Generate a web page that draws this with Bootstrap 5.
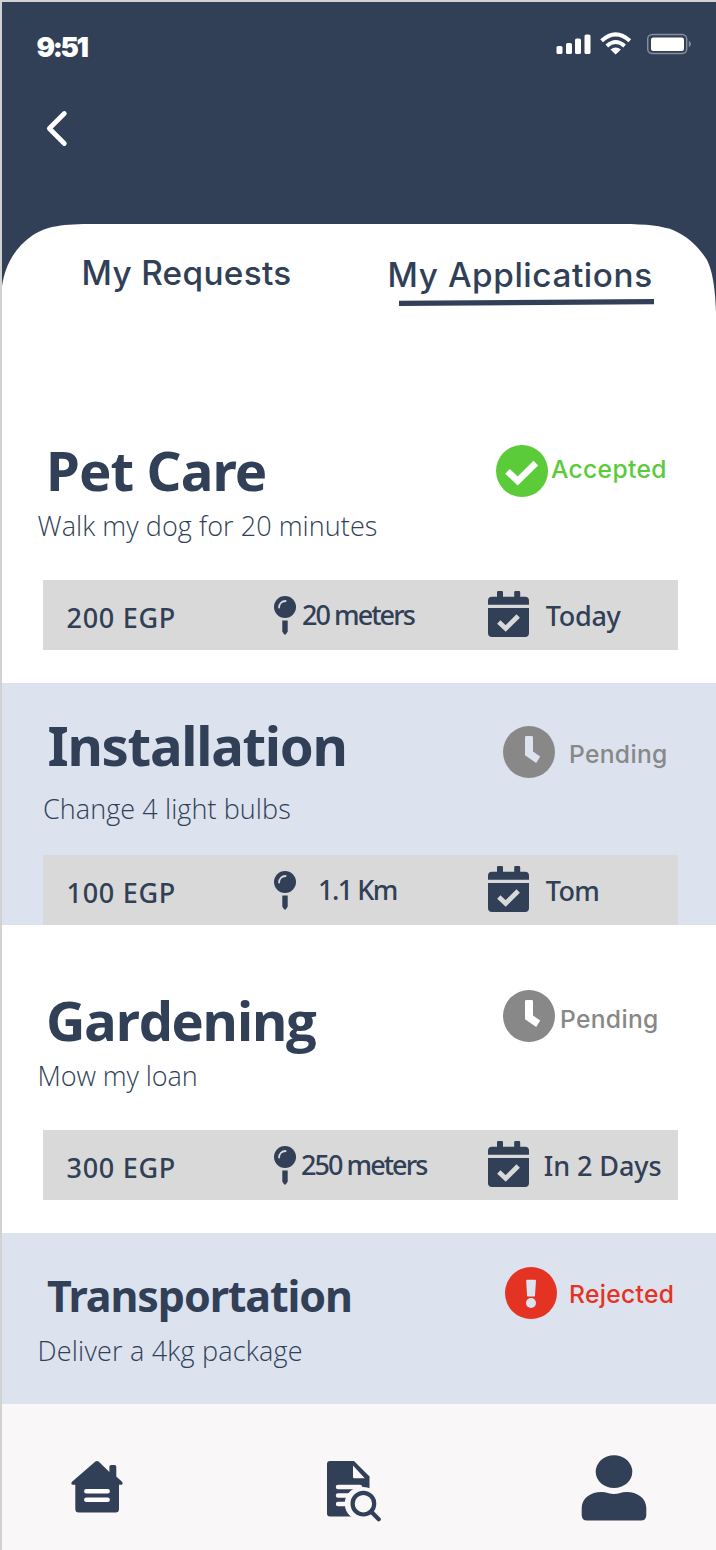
<!DOCTYPE html>
<html lang="en">
<head>
<meta charset="utf-8">
<meta name="viewport" content="width=device-width, initial-scale=1">
<title>My Applications</title>
<link href="https://cdn.jsdelivr.net/npm/bootstrap@5.3.0/dist/css/bootstrap.min.css" rel="stylesheet">
<style>
:root{--navy:#313f57;--tint:#dce2ee;--strip:#d9d9d9}
body{color:var(--navy);background:#fff;font-family:"Noto Sans",sans-serif}
svg{display:block;flex:none}
.phone{width:716px;height:1550px;border:solid #d2d2d2;border-width:2px 0 0 2px;overflow:hidden}
.hero{background:var(--navy);height:310px}
.statusbar{height:60px;padding:30px 25px 0 34.5px}
.clock{font:900 27.5px/30px Inter,sans-serif;letter-spacing:-2.4px}
.back{height:162px;padding:48px 0 0 42px}
.sheet{height:88px;padding:27px 0 0 79.5px;clip-path:path("M0 62C3 42 12 24 31 11C45 2 60 0 93 0H620C645 0 660 2 671 6C685 12 697 23 705 36C711 48 713 65 714 88H0Z")}
.tab{font:500 33.3px/44px Inter,sans-serif;color:var(--navy);white-space:nowrap}
.tab-req{width:306px;letter-spacing:.33px}
.tab-app{margin-top:2px;letter-spacing:.58px}
.underline{margin:1px 0 0 11px}
.list{padding-top:96px}
.job{height:242px;padding-top:31.5px;margin-bottom:33px}
.job.tinted{background:var(--tint);margin-bottom:0}
.job-last{height:170.5px}
.job-head{height:60px;padding-left:44px}
.job-title{font-size:54.5px;line-height:60px;font-weight:700;white-space:nowrap;letter-spacing:-.9px}
.job-desc{font:300 27px/36px "Open Sans",sans-serif;margin:8.5px 0 0 35.5px;white-space:nowrap;letter-spacing:.06px}
.state{width:213px;height:51.5px;font:500 24.6px/30px Inter,sans-serif;letter-spacing:.33px;white-space:nowrap}
.ok{color:#5ccb3a}.wait{color:#888}.bad{color:#e43323}
.strip{width:635px;height:70px;margin-left:41px;background:var(--strip);font-size:27px;line-height:36px;font-weight:500;white-space:nowrap}
.price{width:230px;padding:6px 0 0 23.5px;letter-spacing:.7px}
.dist{width:215.3px}
.dist span{letter-spacing:-1.95px;margin:-1px 0 0 5px}
.when svg{margin-top:-2px}
.when span{margin:2px 0 0 16.5px;letter-spacing:-.3px}
.pet .state{width:220px;margin-top:6px}.pet .state span{margin:-5px 0 0 3px}
.inst .job-head{padding-left:45.5px}
.inst .job-title{letter-spacing:-1.3px}
.inst .job-desc{margin:16px 0 0 41px;letter-spacing:.08px}
.inst .state{margin-top:12px}.inst .state span{margin:4px 0 0 14px}
.inst .dist span{margin-left:21px;letter-spacing:-1.5px}
.inst .when span{letter-spacing:-.7px}
.gard .job-title{font-family:"Open Sans",sans-serif;letter-spacing:-1.5px}
.gard .job-desc{letter-spacing:-.1px}
.gard .state{margin-top:1px}.gard .state span{margin:5px 0 0 5px}
.gard .dist span{margin-left:4px}
.gard .when span{margin-left:14.5px;letter-spacing:-.1px}
.tran .job-head{padding-left:45px}
.tran .job-title{font-size:43px;letter-spacing:-1.1px;padding-top:1px}
.tran .job-desc{letter-spacing:.2px}
.tran .state{width:211px;margin-top:3px}.tran .state span{margin:1.5px 0 0 12px}
.dock{height:147px;background:#f9f7f8;padding:50px 69px 0 68px}
.dock-search{margin-left:2px}
</style>
<script src="https://cdn.jsdelivr.net/npm/bootstrap@5.3.0/dist/js/bootstrap.bundle.min.js"></script>
</head>
<body>
<svg width="0" height="0" class="position-absolute">
  <symbol id="pin" viewBox="0 0 24 40"><circle cx="12" cy="12" r="11" fill="#313f57"/><path d="M6.1 12.5C6.1 8.6 8.8 6.1 12.6 6" fill="none" stroke="#d9d9d9" stroke-width="1.8" stroke-linecap="round"/><path d="M9.3 25.5h5.4v11L12.8 39.5h-1.6L9.3 36.5Z" fill="#313f57"/></symbol>
  <symbol id="cal" viewBox="0 0 41 46"><path d="M0 13.8V9.7Q0 5.8 4 5.8H9V1.2Q9 0 10.2 0H13.8Q15 0 15 1.2V5.8H26.2V1.2Q26.2 0 27.4 0H31Q32.2 0 32.2 1.2V5.8H37Q41 5.8 41 9.7V13.8ZM0 17H41V42Q41 46 37 46H4Q0 46 0 42Z" fill="#313f57"/><path d="M10.8 31L17.7 37.5L30.2 25" fill="none" stroke="#d9d9d9" stroke-width="4.8"/></symbol>
  <symbol id="clock" viewBox="0 0 52 52"><circle cx="26" cy="26" r="26" fill="#888"/><path d="M23.2 10H28.6Q30 10 30 11.4V25.6L37.2 30.6L33.2 36.9L22 29.3V11.4Q22 10 23.2 10Z" fill="var(--hand)"/></symbol>
</svg>
<main class="phone">
  <header class="hero">
    <div class="statusbar d-flex justify-content-between text-white">
      <div class="clock">9:51</div>
      <svg width="136" height="24" viewBox="0 0 136 24" fill="#fff">
        <rect x="1.5" y="14" width="6" height="8" rx="1.6"/><rect x="11" y="11" width="6" height="11" rx="1.6"/><rect x="20" y="6.5" width="6" height="15.5" rx="1.6"/><rect x="29.5" y="2.5" width="6" height="19.5" rx="1.6"/>
        <path d="M46.6 8.8Q60.7-4.2 74.8 8.8" fill="none" stroke="#fff" stroke-width="4"/>
        <path d="M51.8 14Q60.7 6 69.6 14" fill="none" stroke="#fff" stroke-width="3.8"/>
        <path d="M55.5 17.6Q60.7 13.2 65.9 17.6L60.7 22.6Z"/>
        <rect x="92.7" y="2.5" width="39" height="19" rx="4.5" fill="none" stroke="#858d9b" stroke-width="1.5"/>
        <rect x="96" y="5.5" width="33" height="13.5" rx="2.2"/><path d="M133.8 8.5Q138.2 11.8 133.8 15.5Z" fill="#858d9b"/>
      </svg>
    </div>
    <div class="back">
      <svg width="26" height="38" viewBox="0 0 26 38"><path d="M20.3 3.5L5.3 18.5L20.3 33.5" fill="none" stroke="#fff" stroke-width="4.8" stroke-linecap="round" stroke-linejoin="round"/></svg>
    </div>
    <nav class="sheet bg-white d-flex">
      <div class="tab tab-req">My Requests</div>
      <div class="tab tab-app">My Applications
        <svg class="underline" width="255" height="8" viewBox="0 0 255 8"><path d="M0 2.8L255 1V6.2L0 8Z" fill="#313f57"/></svg>
      </div>
    </nav>
  </header>

  <section class="list">
    <article class="job pet d-flex flex-column">
      <div class="job-head d-flex justify-content-between"><h2 class="job-title m-0">Pet Care</h2>
        <div class="state ok d-flex align-items-center">
          <svg width="52" height="52" viewBox="0 0 52 52"><circle cx="26" cy="26" r="26" fill="#5ccb3a"/><path d="M11.5 26.3L21.7 36L39.8 18.2" fill="none" stroke="#fff" stroke-width="6.6" stroke-linejoin="miter"/></svg>
          <span>Accepted</span></div></div>
      <p class="job-desc">Walk my dog for 20 minutes</p>
      <div class="strip d-flex align-items-center mt-auto">
        <div class="price">200 EGP</div>
        <div class="dist d-flex align-items-center"><svg width="24" height="40"><use href="#pin"/></svg><span>20 meters</span></div>
        <div class="when d-flex align-items-center"><svg width="41" height="46"><use href="#cal"/></svg><span>Today</span></div>
      </div>
    </article>

    <article class="job inst tinted d-flex flex-column" style="--hand:#dce2ee">
      <div class="job-head d-flex justify-content-between"><h2 class="job-title m-0">Installation</h2>
        <div class="state wait d-flex align-items-center"><svg width="52" height="52"><use href="#clock"/></svg><span>Pending</span></div></div>
      <p class="job-desc">Change 4 light bulbs</p>
      <div class="strip d-flex align-items-center mt-auto">
        <div class="price">100 EGP</div>
        <div class="dist d-flex align-items-center"><svg width="24" height="40"><use href="#pin"/></svg><span>1.1 Km</span></div>
        <div class="when d-flex align-items-center"><svg width="41" height="46"><use href="#cal"/></svg><span>Tom</span></div>
      </div>
    </article>

    <article class="job gard d-flex flex-column" style="--hand:#fff;margin-top:33px">
      <div class="job-head d-flex justify-content-between"><h2 class="job-title m-0">Gardening</h2>
        <div class="state wait d-flex align-items-center"><svg width="52" height="52"><use href="#clock"/></svg><span>Pending</span></div></div>
      <p class="job-desc">Mow my loan</p>
      <div class="strip d-flex align-items-center mt-auto">
        <div class="price">300 EGP</div>
        <div class="dist d-flex align-items-center"><svg width="24" height="40"><use href="#pin"/></svg><span>250 meters</span></div>
        <div class="when d-flex align-items-center"><svg width="41" height="46"><use href="#cal"/></svg><span>In 2 Days</span></div>
      </div>
    </article>

    <article class="job job-last tran tinted d-flex flex-column">
      <div class="job-head d-flex justify-content-between"><h2 class="job-title m-0">Transportation</h2>
        <div class="state bad d-flex align-items-center">
          <svg width="52" height="52" viewBox="0 0 52 52"><circle cx="26" cy="26" r="26" fill="#e43323"/><path d="M22.2 12.7H30Q31 12.7 31 13.7L30 28.6Q30 29.5 29 29.5H23Q22.1 29.5 22 28.6L21.2 13.7Q21.2 12.7 22.2 12.7Z" fill="#dce2ee"/><circle cx="26" cy="36" r="5" fill="#dce2ee"/></svg>
          <span>Rejected</span></div></div>
      <p class="job-desc">Deliver a 4kg package</p>
    </article>
  </section>

  <nav class="dock d-flex justify-content-between">
    <svg width="54" height="68" viewBox="0 0 54 68"><path d="M25.4 7.6Q27 6.4 28.6 7.6L39.4 18V12.8Q39.4 11 41.2 11H44.6Q46.3 11 46.3 12.8V22.5L52 27.8Q53.8 30.5 51 30.8H49V55Q49 58.5 45.5 58.5H8.8Q5.3 58.5 5.3 55V30.8H3Q.2 30.5 2 27.8Z" fill="#313f57"/><path d="M16.3 37.3H37.7M16.3 45.8H37.7" stroke="#fff" stroke-width="4.4" stroke-linecap="round"/></svg>
    <svg class="dock-search" width="56" height="68" viewBox="0 0 56 68"><path d="M4 7H28L43.5 22.5V62.5H4Q1 62.5 1 59.5V10Q1 7 4 7Z" fill="#313f57"/><path d="M27 11.5V23Q27 24.2 28.2 24.2H38.7Z" fill="#f9f7f8"/><path d="M12 33H34M12 41.5H26M12 50H22" stroke="#f9f7f8" stroke-width="4.4" stroke-linecap="round"/><path d="M37.5 33A16.7 16.7 0 0 0 25.5 63H45V34.5Q41 33 37.5 33Z" fill="#f9f7f8"/><circle cx="37.4" cy="49.7" r="10.8" fill="none" stroke="#313f57" stroke-width="4.2"/><path d="M45.5 58L52.7 65.2" stroke="#313f57" stroke-width="4.2" stroke-linecap="round"/></svg>
    <svg width="66" height="68" viewBox="0 0 66 68" fill="#313f57"><ellipse cx="33" cy="17.7" rx="18.3" ry="16.4"/><path d="M20.3 38Q24.3 38 26.8 39Q33 41.2 39.2 39Q41.7 38 45.7 38C56 38 65.3 44 65.3 54V61Q65.3 66.5 59.8 66.5H6.2Q.7 66.5 .7 61V54C.7 44 10 38 20.3 38Z"/></svg>
  </nav>
</main>
</body>
</html>
